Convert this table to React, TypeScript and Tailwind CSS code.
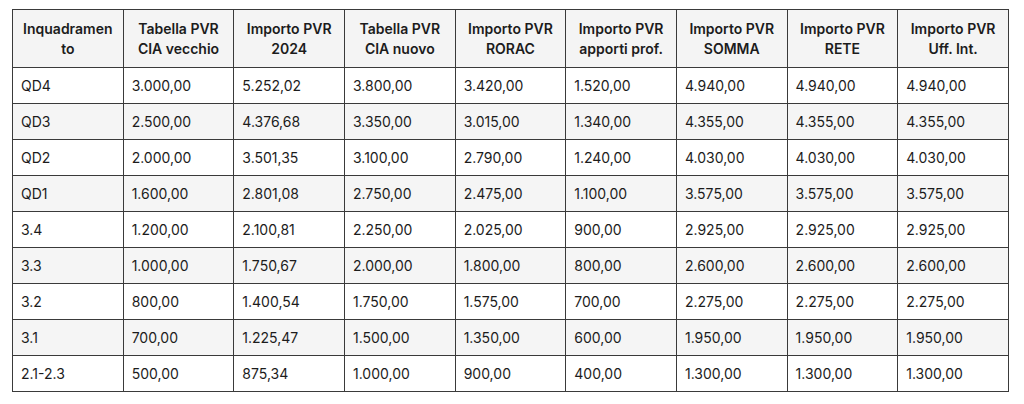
import React from "react";

const headers: [string, string][] = [
  ["Inquadramen", "to"],
  ["Tabella PVR", "CIA vecchio"],
  ["Importo PVR", "2024"],
  ["Tabella PVR", "CIA nuovo"],
  ["Importo PVR", "RORAC"],
  ["Importo PVR", "apporti prof."],
  ["Importo PVR", "SOMMA"],
  ["Importo PVR", "RETE"],
  ["Importo PVR", "Uff. Int."],
];

const rows: string[][] = [
  ["QD4", "3.000,00", "5.252,02", "3.800,00", "3.420,00", "1.520,00", "4.940,00", "4.940,00", "4.940,00"],
  ["QD3", "2.500,00", "4.376,68", "3.350,00", "3.015,00", "1.340,00", "4.355,00", "4.355,00", "4.355,00"],
  ["QD2", "2.000,00", "3.501,35", "3.100,00", "2.790,00", "1.240,00", "4.030,00", "4.030,00", "4.030,00"],
  ["QD1", "1.600,00", "2.801,08", "2.750,00", "2.475,00", "1.100,00", "3.575,00", "3.575,00", "3.575,00"],
  ["3.4", "1.200,00", "2.100,81", "2.250,00", "2.025,00", "900,00", "2.925,00", "2.925,00", "2.925,00"],
  ["3.3", "1.000,00", "1.750,67", "2.000,00", "1.800,00", "800,00", "2.600,00", "2.600,00", "2.600,00"],
  ["3.2", "800,00", "1.400,54", "1.750,00", "1.575,00", "700,00", "2.275,00", "2.275,00", "2.275,00"],
  ["3.1", "700,00", "1.225,47", "1.500,00", "1.350,00", "600,00", "1.950,00", "1.950,00", "1.950,00"],
  ["2.1-2.3", "500,00", "875,34", "1.000,00", "900,00", "400,00", "1.300,00", "1.300,00", "1.300,00"],
];

export default function App() {
  return (
    <div
      className="w-[1024px] h-[404px] bg-white pl-[12px] pt-[9px] text-[#1c1c1c]"
      style={{ fontFamily: "Inter, 'Noto Sans', sans-serif" }}
    >
      <table className="w-[997px] table-fixed border-collapse border border-[#3a3a3a] text-[14px] leading-[20px]">
        <thead>
          <tr className="h-[58px] bg-[#f4f4f4]">
            {headers.map((h, i) => (
              <th
                key={i}
                className="border border-[#3a3a3a] px-2 text-center font-semibold align-middle"
              >
                {h[0]}
                <br />
                {h[1]}
              </th>
            ))}
          </tr>
        </thead>
        <tbody>
          {rows.map((r, ri) => (
            <tr key={ri} className={ri % 2 === 1 ? "h-[36px] bg-[#f5f5f5]" : "h-[36px] bg-white"}>
              {r.map((c, ci) => (
                <td key={ci} className="border border-[#3a3a3a] px-2 text-left align-middle">
                  {c}
                </td>
              ))}
            </tr>
          ))}
        </tbody>
      </table>
    </div>
  );
}
